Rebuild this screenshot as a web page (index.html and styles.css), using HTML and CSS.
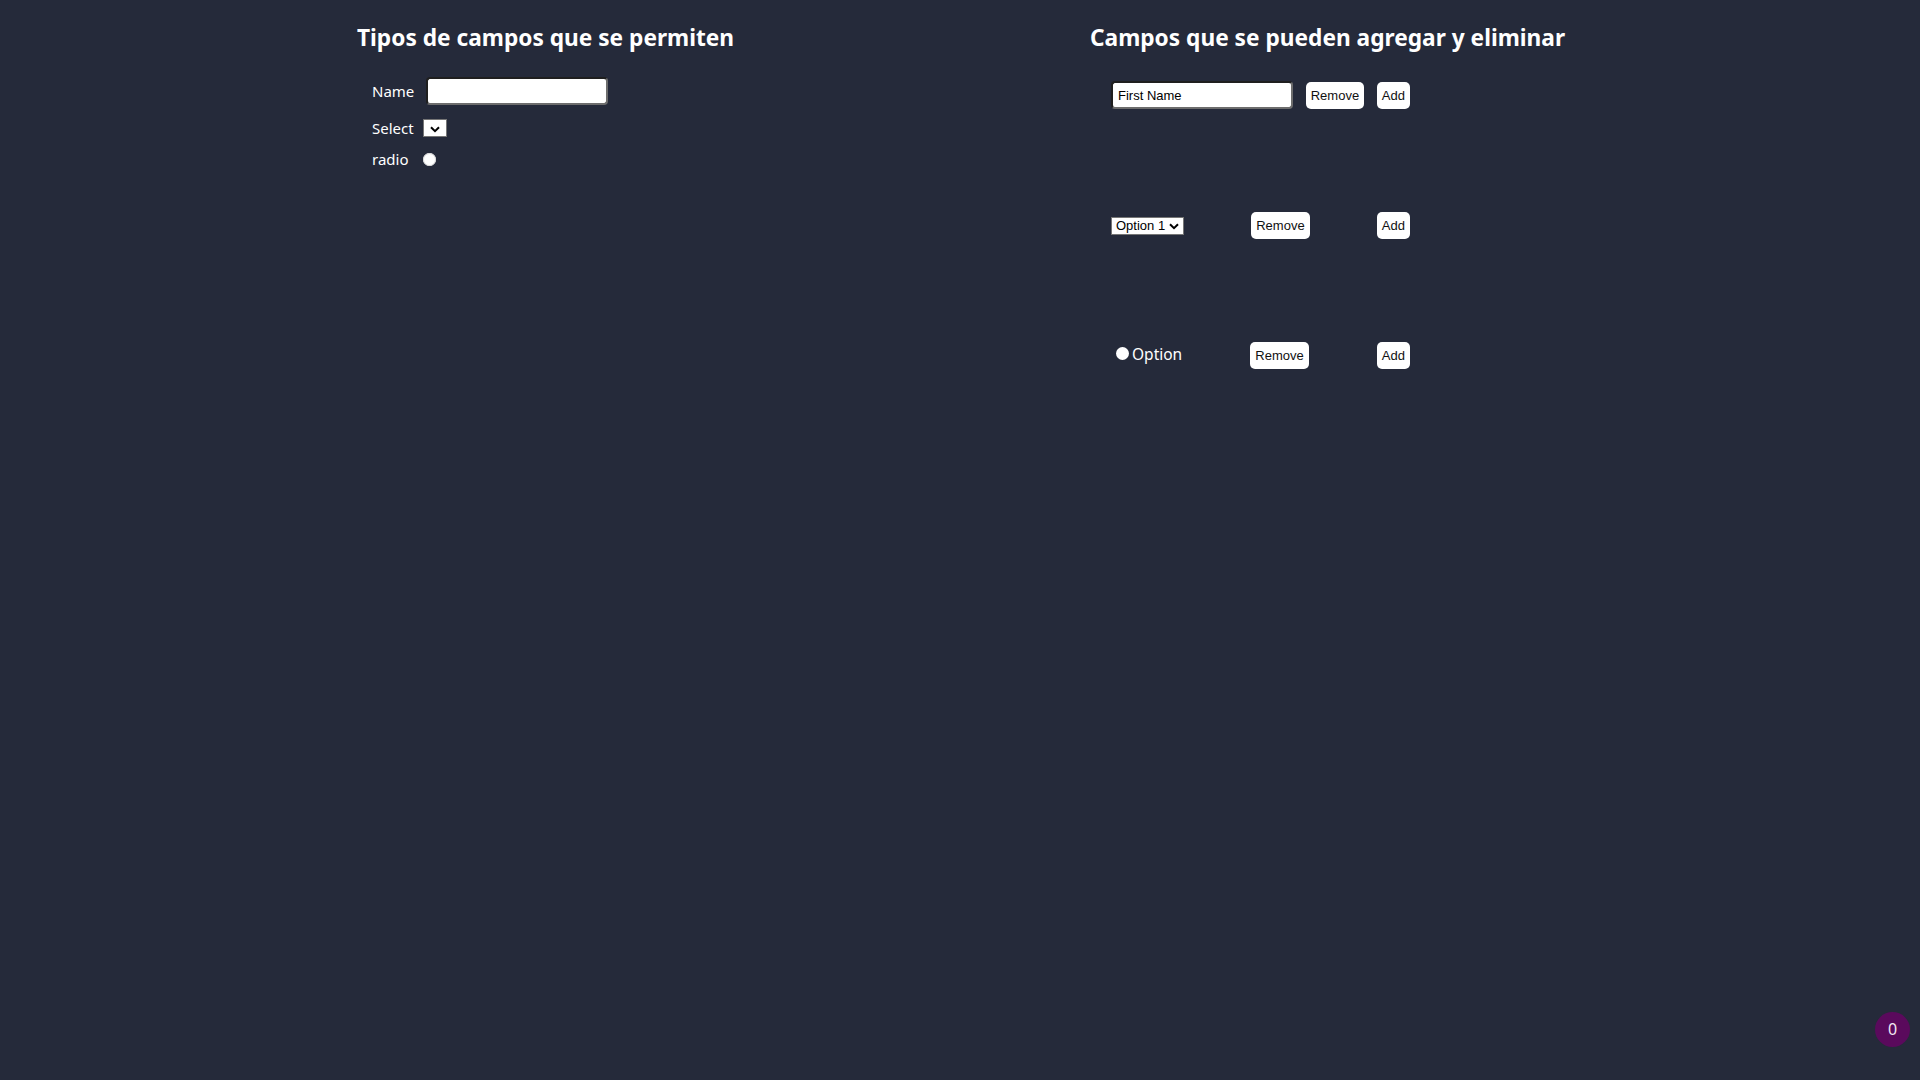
FILE: index.html
```html
<!DOCTYPE html>
<html lang="es">
<head>
<meta charset="utf-8">
<title>Campos</title>
<link rel="stylesheet" href="styles.css">
</head>
<body>
<main class="page">
  <section class="col col-left">
    <h2 class="title">Tipos de campos que se permiten</h2>
    <form class="types">
      <div class="frow">
        <label class="lbl lbl-name">Name</label>
        <input class="txt" type="text">
      </div>
      <div class="frow">
        <label class="lbl lbl-select">Select</label>
        <select class="sel-empty"><option></option></select>
      </div>
      <div class="frow">
        <label class="lbl lbl-radio">radio</label>
        <input class="rad" type="radio">
      </div>
    </form>
  </section>
  <section class="col col-right">
    <h2 class="title">Campos que se pueden agregar y eliminar</h2>
    <div class="dyn">
      <div class="drow">
        <input class="txt txt-first" type="text" value="First Name">
        <button class="btn" type="button">Remove</button>
        <button class="btn" type="button">Add</button>
      </div>
      <div class="drow">
        <select class="sel-opt"><option>Option 1</option></select>
        <button class="btn" type="button">Remove</button>
        <button class="btn" type="button">Add</button>
      </div>
      <div class="drow">
        <label class="opt"><input class="rad rad-opt" type="radio">Option</label>
        <button class="btn" type="button">Remove</button>
        <button class="btn" type="button">Add</button>
      </div>
    </div>
  </section>
</main>
<div class="badge">0</div>
</body>
</html>
```

FILE: styles.css
```css
html, body {
  margin: 0;
  padding: 0;
  background: #252a3a;
  height: 100%;
}
body {
  font-family: "Noto Sans", "Open Sans", sans-serif;
  color: #ffffff;
}
.page {
  display: grid;
  grid-template-columns: 733px auto;
  padding-left: 357px;
}
.title {
  margin: 22px 0 0;
  font-size: 22.7px;
  line-height: 32px;
  font-weight: 700;
  color: #ffffff;
  white-space: nowrap;
}
.types {
  margin-top: 23px;
  padding-left: 15px;
  display: flex;
  flex-direction: column;
  gap: 14px;
}
.frow {
  display: flex;
  align-items: center;
}
.lbl {
  font-size: 15px;
  line-height: 17px;
}
.lbl-name { margin-right: 12px; }
.lbl-select { margin-right: 9px; }
.lbl-radio { margin-right: 15px; }
.txt {
  box-sizing: border-box;
  width: 182px;
  height: 28px;
  margin: 0;
  padding: 1px 8px;
  background: #ffffff;
  border: 2px solid;
  border-color: #1f1f1f #6d6d6d #6d6d6d #1f1f1f;
  border-radius: 4px;
  font-family: "Liberation Sans", Arial, sans-serif;
  font-size: 13px;
  color: #000000;
  outline: none;
}
.sel-empty {
  -webkit-appearance: none;
  appearance: none;
  box-sizing: border-box;
  width: 24px;
  height: 18px;
  margin: 0;
  border: 1px solid #767676;
  border-radius: 0;
  background: #ffffff url("data:image/svg+xml,%3Csvg xmlns='http://www.w3.org/2000/svg' width='10' height='7' viewBox='0 0 10 7'%3E%3Cpath d='M1 1.2 5 5.2 9 1.2' fill='none' stroke='%23000' stroke-width='2'/%3E%3C/svg%3E") no-repeat center 6px;
}
.rad {
  -webkit-appearance: none;
  appearance: none;
  width: 13px;
  height: 13px;
  margin: 0;
  border: none;
  border-radius: 50%;
  background: #ffffff;
  box-shadow: inset 0 0 0 1px #d8d8d8;
}
.dyn {
  margin-top: 25px;
  padding-left: 21px;
  width: 299px;
}
.drow {
  display: flex;
  justify-content: space-between;
  align-items: baseline;
  height: 130px;
}
.drow:first-child {
  height: 133px;
}
.btn {
  box-sizing: border-box;
  height: 27px;
  margin: 0;
  padding: 0 5px;
  background: #ffffff;
  border: none;
  border-radius: 5px;
  font-family: "Liberation Sans", Arial, sans-serif;
  font-size: 13px;
  color: #111111;
}
.txt-first {
  margin-top: 2px;
  padding-left: 5px;
}
.sel-opt {
  -webkit-appearance: none;
  appearance: none;
  box-sizing: border-box;
  width: 73px;
  height: 18px;
  margin: 3px 0 0;
  padding: 0 0 0 4px;
  border: 1px solid #767676;
  border-radius: 0;
  font-family: "Liberation Sans", Arial, sans-serif;
  font-size: 13px;
  line-height: 16px;
  color: #000000;
  background: #ffffff url("data:image/svg+xml,%3Csvg xmlns='http://www.w3.org/2000/svg' width='10' height='7' viewBox='0 0 10 7'%3E%3Cpath d='M1 1.2 5 5.2 9 1.2' fill='none' stroke='%23000' stroke-width='2'/%3E%3C/svg%3E") no-repeat right 4px center;
}
.opt {
  display: flex;
  align-items: center;
  gap: 3px;
  font-size: 15.5px;
  line-height: 20px;
  padding-left: 5px;
}
.rad-opt { box-shadow: none; }
.badge {
  position: fixed;
  right: 10px;
  bottom: 33px;
  width: 35px;
  height: 35px;
  border-radius: 50%;
  background: #5a0a5c;
  color: #f2e8f2;
  font-family: "Noto Sans", sans-serif;
  font-size: 16px;
  line-height: 35px;
  text-align: center;
}
```
